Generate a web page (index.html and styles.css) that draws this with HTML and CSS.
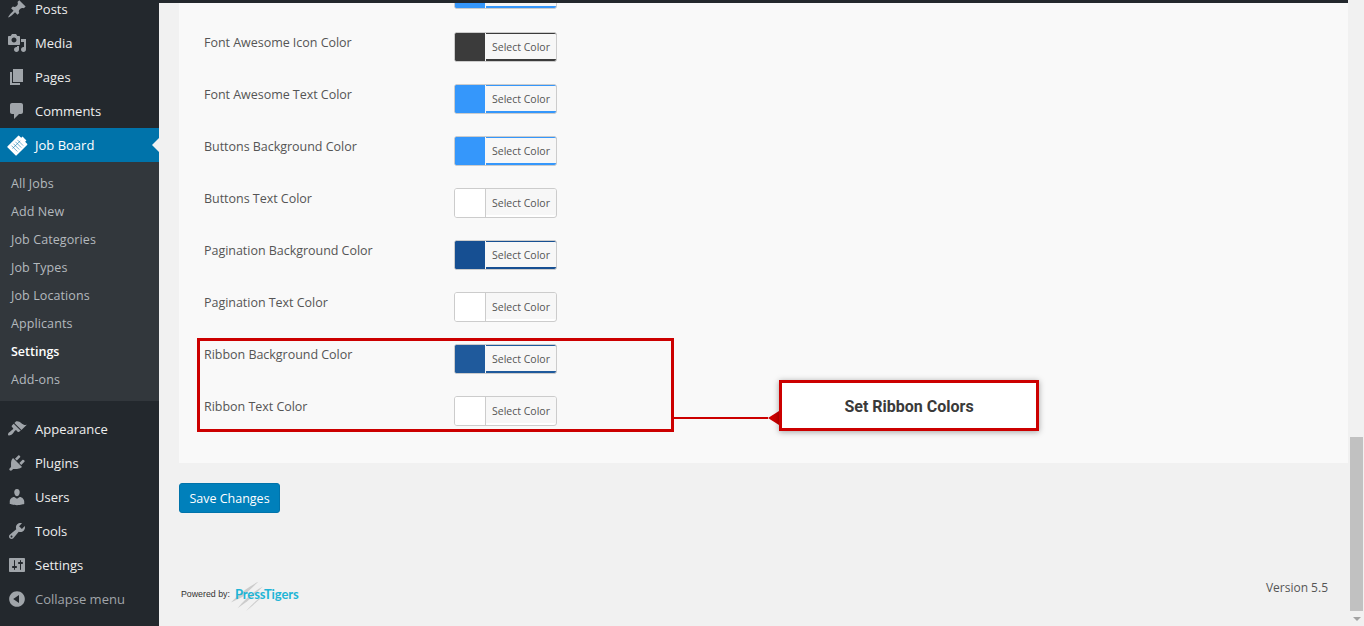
FILE: index.html
```html
<!DOCTYPE html>
<html lang="en">
<head>
<meta charset="utf-8">
<title>Job Board Settings</title>
<link rel="stylesheet" href="styles.css">
</head>
<body>
<div class="app">
  <nav class="sidebar">
    <ul class="menu first">
      <li class="item"><svg class="ico" viewBox="0 0 20 20"><path d="M10.44 3.02l1.82-1.82 6.36 6.35-1.83 1.82c-1.05-.68-2.48-.57-3.41.36l-.75.75c-.92.93-1.04 2.35-.35 3.41l-1.83 1.82-2.41-2.41-2.8 2.79c-.42.42-3.38 2.71-3.8 2.29s1.86-3.39 2.28-3.81l2.79-2.79L4.1 9.36l1.83-1.82c1.05.69 2.48.57 3.4-.36l.75-.75c.93-.92 1.05-2.35.36-3.41z"/></svg>Posts</li>
      <li class="item"><svg class="ico" viewBox="0 0 20 20"><path d="M13 11V4c0-.55-.45-1-1-1h-1.67L9 1H5L3.67 3H2c-.55 0-1 .45-1 1v7c0 .55.45 1 1 1h10c.55 0 1-.45 1-1zM7 4.5c1.38 0 2.5 1.12 2.5 2.5S8.38 9.5 7 9.5 4.5 8.38 4.5 7 5.62 4.5 7 4.5zM14 6h5v10.5c0 1.38-1.12 2.5-2.5 2.5S14 17.88 14 16.5s1.12-2.5 2.5-2.5c.17 0 .34.02.5.05V9h-3V6zm-4 8.05V13h2v3.5c0 1.38-1.12 2.5-2.5 2.5S7 17.88 7 16.5 8.12 14 9.5 14c.17 0 .34.02.5.05z"/></svg>Media</li>
      <li class="item"><svg class="ico" viewBox="0 0 20 20"><path d="M6 15V2h10v13H6zm-1 1h8v2H3V5h2v11z"/></svg>Pages</li>
      <li class="item"><svg class="ico" viewBox="0 0 20 20"><path d="M5 2h9c1.1 0 2 .9 2 2v7c0 1.1-.9 2-2 2h-2l-5 5v-5H5c-1.1 0-2-.9-2-2V4c0-1.1.9-2 2-2z"/></svg>Comments</li>
      <li class="item current"><svg class="ico" viewBox="0 0 24 24"><g transform="rotate(45 12 12)"><path d="M6 4h3V2h6v2h3a1 1 0 0 1 1 1v16a1 1 0 0 1-1 1H6a1 1 0 0 1-1-1V5a1 1 0 0 1 1-1z"/><path class="lines" d="M7.5 8.5h9M7.5 11.5h9M7.5 14.5h9M7.5 17.5h9M10.5 7v12"/></g></svg>Job Board</li>
    </ul>
    <ul class="submenu">
      <li>All Jobs</li>
      <li>Add New</li>
      <li>Job Categories</li>
      <li>Job Types</li>
      <li>Job Locations</li>
      <li>Applicants</li>
      <li class="active">Settings</li>
      <li>Add-ons</li>
    </ul>
    <ul class="menu second">
      <li class="item"><svg class="ico" viewBox="0 0 20 20"><path d="M14.48 11.06L7.41 3.99l1.5-1.5c.5-.56 2.3-.47 3.51.32 1.21.8 1.43 1.28 2.91 2.1 1.18.64 2.45 1.26 4.45.85zm-.71.71L6.7 4.7 4.93 6.47c-.39.39-.39 1.02 0 1.41l1.06 1.06c.39.39.39 1.03 0 1.42-.6.6-1.43 1.11-2.21 1.69-.35.26-.7.53-1.01.84C1.43 13.23.5 15.43 1.3 16.24c.8.8 2.98-.11 4.3-1.43.31-.31.58-.66.84-1.01.58-.78 1.09-1.61 1.69-2.21.39-.39 1.02-.39 1.41 0l1.06 1.06c.39.39 1.02.39 1.41 0z"/></svg>Appearance</li>
      <li class="item"><svg class="ico" viewBox="0 0 20 20"><path d="M13.11 4.36L9.87 7.6 8 5.73l3.24-3.24c.35-.34 1.05-.2 1.56.32.52.51.66 1.21.31 1.55zm-8 1.77l.91-1.12 9.01 9.01-1.19.84c-.71.71-2.63 1.16-3.82 1.16H6.14L4.9 17.26c-.59.59-1.54.59-2.12 0-.59-.58-.59-1.53 0-2.12l1.24-1.24v-3.88c0-1.13.4-3.19 1.09-3.89zm7.26 3.97l3.24-3.24c.34-.35 1.04-.21 1.55.31.52.51.66 1.21.31 1.55l-3.24 3.25z"/></svg>Plugins</li>
      <li class="item"><svg class="ico" viewBox="0 0 20 20"><path d="M10 9.25c-2.27 0-2.73-3.44-2.73-3.44C7 4.02 7.82 2 9.97 2c2.16 0 2.98 2.02 2.71 3.81 0 0-.41 3.44-2.68 3.44zm0 2.57L12.72 10c2.39 0 4.52 2.33 4.52 4.53v2.49s-3.65 1.13-7.24 1.13c-3.65 0-7.24-1.13-7.24-1.13v-2.49c0-2.25 1.94-4.48 4.47-4.48z"/></svg>Users</li>
      <li class="item"><svg class="ico" viewBox="0 0 20 20"><path d="M16.68 9.77c-1.34 1.34-3.3 1.67-4.95.99l-5.41 6.52c-.99.99-2.59.99-3.58 0s-.99-2.59 0-3.57l6.52-5.42c-.68-1.65-.35-3.61.99-4.95 1.28-1.28 3.12-1.62 4.72-1.06l-2.89 2.89 2.82 2.82 2.86-2.87c.53 1.58.18 3.39-1.08 4.65zM3.81 16.21c.4.39 1.04.39 1.43 0 .4-.4.4-1.04 0-1.43-.39-.4-1.03-.4-1.43 0-.39.39-.39 1.03 0 1.43z"/></svg>Tools</li>
      <li class="item"><svg class="ico" viewBox="0 0 20 20"><path d="M18 16V4c0-.55-.45-1-1-1H3c-.55 0-1 .45-1 1v12c0 .55.45 1 1 1h14c.55 0 1-.45 1-1zM8 11h1c.55 0 1 .45 1 1s-.45 1-1 1H8v1.5c0 .28-.22.5-.5.5s-.5-.22-.5-.5V13H6c-.55 0-1-.45-1-1s.45-1 1-1h1V5.5c0-.28.22-.5.5-.5s.5.22.5.5V11zm5-2h-1c-.55 0-1-.45-1-1s.45-1 1-1h1V5.5c0-.28.22-.5.5-.5s.5.22.5.5V7h1c.55 0 1 .45 1 1s-.45 1-1 1h-1v5.5c0 .28-.22.5-.5.5s-.5-.22-.5-.5V9z"/></svg>Settings</li>
      <li class="item collapse"><svg class="ico" viewBox="0 0 20 20"><path d="M10 2.16c4.33 0 7.84 3.51 7.84 7.84s-3.51 7.84-7.84 7.84S2.16 14.33 2.16 10 5.71 2.16 10 2.16zm2 11.72V6.12L6.18 9.97z"/></svg>Collapse menu</li>
    </ul>
  </nav>
  <div class="content">
    <div class="topline"></div>
    <main class="main">
      <section class="panel">
        <div class="row cut"><span class="picker blue"><i class="swatch"></i><b></b></span></div>
        <div class="row"><span class="label">Font Awesome Icon Color</span><span class="picker dark"><i class="swatch"></i><b>Select Color</b></span></div>
        <div class="row"><span class="label">Font Awesome Text Color</span><span class="picker blue"><i class="swatch"></i><b>Select Color</b></span></div>
        <div class="row"><span class="label">Buttons Background Color</span><span class="picker blue"><i class="swatch"></i><b>Select Color</b></span></div>
        <div class="row"><span class="label">Buttons Text Color</span><span class="picker"><i class="swatch"></i><b>Select Color</b></span></div>
        <div class="row"><span class="label">Pagination Background Color</span><span class="picker navy"><i class="swatch"></i><b>Select Color</b></span></div>
        <div class="row"><span class="label">Pagination Text Color</span><span class="picker"><i class="swatch"></i><b>Select Color</b></span></div>
        <div class="row"><span class="label">Ribbon Background Color</span><span class="picker ribbon"><i class="swatch"></i><b>Select Color</b></span></div>
        <div class="row"><span class="label">Ribbon Text Color</span><span class="picker"><i class="swatch"></i><b>Select Color</b></span></div>
        <div class="highlight"></div>
        <div class="connector"></div>
        <div class="callout">Set Ribbon Colors</div>
      </section>
      <button class="save" type="button">Save Changes</button>
      <footer class="foot">
        <div class="powered"><span class="by">Powered by:</span><span class="logo"><svg class="claw" viewBox="0 0 36 36"><path d="M1 26C9 17 20 9 30 4L13 20z"/><path d="M8 32C15 23 25 14 35 9L18 25z"/><path d="M17 35C22 29 28 23 35 19L24 29z"/></svg><span class="brand">PressTigers</span></span></div>
        <div class="version">Version 5.5</div>
      </footer>
    </main>
    <div class="scrollbar"><div class="thumb"></div><div class="down"></div></div>
  </div>
</div>
</body>
</html>
```
FILE: styles.css
```css
* { box-sizing: border-box; }
html, body { margin: 0; height: 100%; overflow: hidden; }
body { font-family: "Open Sans", "Noto Sans", sans-serif; background: #f1f1f1; color: #444; }
ul { list-style: none; margin: 0; padding: 0; }
.app { display: flex; height: 626px; overflow: hidden; }

.sidebar { width: 159px; flex: none; background: #23282d; color: #eee; font-size: 13px; }
.menu.first { margin-top: -8px; }
.menu.second { margin-top: 11px; }
.item { position: relative; height: 34px; display: flex; align-items: center; padding-left: 7px; gap: 8px; }
.ico { width: 20px; height: 20px; fill: #a0a5aa; flex: none; }
.current { background: #0073aa; color: #fff; }
.current .ico { fill: #fff; width: 22px; height: 22px; margin-right: -2px; }
.lines { fill: none; stroke: #0073aa; stroke-width: .7; stroke-opacity: .8; }
.current::after { content: ""; position: absolute; right: 0; top: 10px; border: 7px solid transparent; border-right-color: #f1f1f1; border-left-width: 0; }
.collapse { color: #a0a5aa; }
.submenu { background: #32373c; padding: 8px 0 7px; height: 239px; font-size: 12.5px; color: #b4b9be; }
.submenu li { height: 28px; line-height: 28px; padding-left: 11px; letter-spacing: .1px; }
.submenu .active { color: #fff; font-weight: 600; letter-spacing: 0; }

.content { flex: 1; min-width: 0; position: relative; display: flex; flex-wrap: wrap; align-content: flex-start; }
.topline { width: 1189px; height: 3px; background: #23282d; }
.main { width: 1189px; padding-left: 20px; }
.panel { position: relative; background: #f9f9f9; height: 460px; padding: 0 0 0 25px; overflow: hidden; width: 1169px; }
.row { display: flex; height: 52px; }
.row.cut { height: 29px; padding-left: 250px; }
.row.cut .picker { flex: none; margin-top: -24px; }
.label { width: 250px; flex: none; font-size: 12.5px; color: #555; padding-top: 2px; line-height: 18px; letter-spacing: -.03px; }
.picker { display: flex; width: 103px; height: 30px; border: 1px solid #ccc; border-radius: 3px; overflow: hidden; background: #fff; }
.picker i { width: 31px; border-right: 1px solid #ccc; background: #fff; flex: none; }
.picker b { flex: 1; margin-bottom: 2px; font-weight: 400; font-size: 10.5px; line-height: 28px; text-align: center; color: #555; background: #f7f7f7; }
.picker.dark b, .picker.blue b, .picker.navy b, .picker.ribbon b { margin-top: 1px; line-height: 26px; }
.picker.dark i, .picker.blue i, .picker.navy i, .picker.ribbon i { border-right-color: #f7f7f7; }
.picker.dark, .picker.dark i { background-color: #3b3b3b; }
.picker.blue, .picker.blue i { background-color: #3597fb; }
.picker.navy, .picker.navy i { background-color: #164f92; }
.picker.ribbon, .picker.ribbon i { background-color: #1f5a9c; }

.highlight { position: absolute; left: 18px; top: 335px; width: 477px; height: 94px; border: 3px solid #c00; }
.connector { position: absolute; left: 494px; top: 414px; width: 95px; height: 2px; background: #c00; }
.connector::after { content: ""; position: absolute; right: -11px; top: -6px; border: 7px solid transparent; border-right: 11px solid #c00; border-left-width: 0; }
.callout { position: absolute; left: 600px; top: 377px; width: 260px; height: 51px; border: 3px solid #c00; background: #fff; box-shadow: 0 1px 6px rgba(0,0,0,.35); font: 700 16px/47px Roboto, sans-serif; color: #3a3a3a; text-align: center; }

.save { display: block; margin-top: 20px; width: 101px; height: 30px; padding: 0; border: 1px solid #0073aa; border-radius: 3px; background: #0080bb; color: #fff; font: 12.5px "Open Sans", sans-serif; }
.foot { display: flex; justify-content: space-between; align-items: center; margin-top: 66px; padding-right: 20px; }
.powered { display: flex; align-items: center; padding-left: 2px; }
.by { font: 8.8px "Liberation Sans", sans-serif; color: #333; }
.logo { position: relative; display: flex; align-items: center; margin-left: 5px; }
.claw { position: absolute; left: -5px; top: -8px; width: 34px; height: 34px; fill: #ccc; }
.brand { position: relative; font: 700 13px Lato, sans-serif; color: #1fb5d6; letter-spacing: -.1px; }
.version { font-size: 12px; color: #555; margin-bottom: 12px; }

.scrollbar { position: absolute; top: 0; right: 0; width: 16px; height: 626px; background: #f1f1f1; }
.thumb { position: absolute; left: 2px; top: 437px; width: 13px; height: 174px; background: #c1c1c1; }
.down { position: absolute; left: 5px; top: 617px; border: 4px solid transparent; border-top-color: #a3a3a3; }
```
